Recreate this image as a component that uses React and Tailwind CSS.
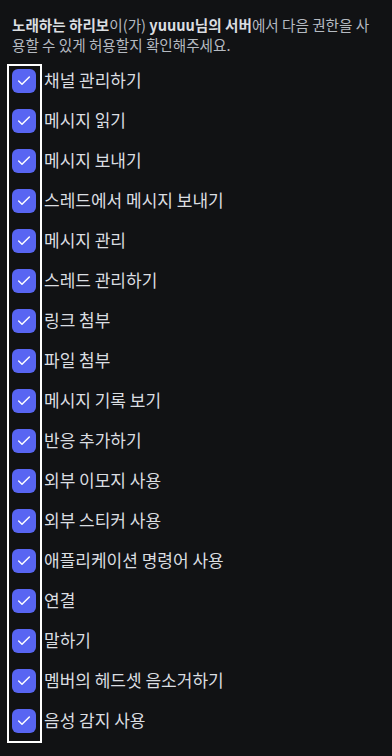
import { Check } from 'lucide-react';

const perms = [
  '채널 관리하기',
  '메시지 읽기',
  '메시지 보내기',
  '스레드에서 메시지 보내기',
  '메시지 관리',
  '스레드 관리하기',
  '링크 첨부',
  '파일 첨부',
  '메시지 기록 보기',
  '반응 추가하기',
  '외부 이모지 사용',
  '외부 스티커 사용',
  '애플리케이션 명령어 사용',
  '연결',
  '말하기',
  '멤버의 헤드셋 음소거하기',
  '음성 감지 사용',
];

export default function App() {
  return (
    <div className="w-[392px] h-[756px] bg-[#111214] overflow-hidden" style={{ fontFamily: '"Noto Sans CJK KR", "Noto Sans", sans-serif' }}>
      <p className="pl-3 pr-[20px] pt-[15px] text-[14.6px] leading-[20px] text-[#b5bac1]">
        <span className="font-bold text-[#dbdee1]">노래하는 하리보</span>이(가) <span className="font-bold text-[#dbdee1]">yuuuu님의 서버</span>에서 다음 권한을 사용할 수 있게 허용할지 확인해주세요.
      </p>
      <div className="relative mt-[9px]">
        <div className="absolute left-[7px] top-0 w-[35px] h-[679px] border-2 border-white pointer-events-none" />
        <ul className="pt-[5px]">
          {perms.map((p) => (
            <li key={p} className="flex items-start h-[40px] pl-3 gap-[8px]">
              <span className="w-6 h-6 rounded-[6px] bg-[#5865f2] flex items-center justify-center shrink-0">
                <Check size={16} strokeWidth={2.2} className="text-white" />
              </span>
              <span className="text-[17px] leading-[22px] text-[#dbdee1] whitespace-nowrap">{p}</span>
            </li>
          ))}
        </ul>
      </div>
    </div>
  );
}
